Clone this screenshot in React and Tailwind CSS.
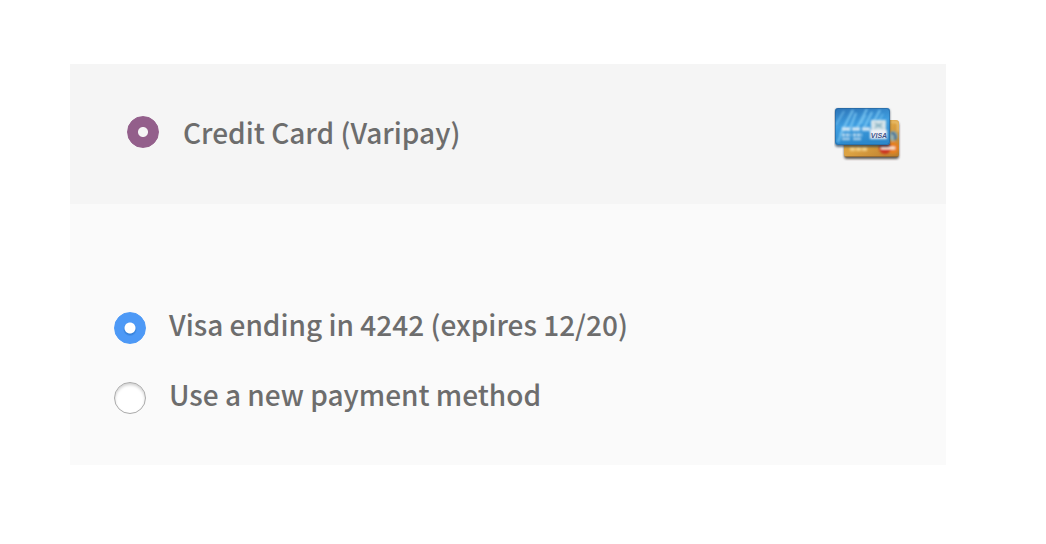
import { useState } from "react";

function CardsIcon() {
  return (
    <svg width="68" height="54" viewBox="0 0 68 54" role="img" aria-label="Visa and MasterCard" className="shrink-0">
      <defs>
        <linearGradient id="blue" x1="0" y1="0" x2="0.25" y2="1">
          <stop offset="0" stopColor="#2c73b6" />
          <stop offset="0.5" stopColor="#3f9ee0" />
          <stop offset="1" stopColor="#2c88cb" />
        </linearGradient>
        <linearGradient id="gold" x1="0" y1="0" x2="1" y2="1">
          <stop offset="0" stopColor="#d9a03c" />
          <stop offset="0.5" stopColor="#dca242" />
          <stop offset="1" stopColor="#b97b2b" />
        </linearGradient>
        <filter id="shade" x="-20%" y="-20%" width="140%" height="140%">
          <feGaussianBlur stdDeviation="0.9" />
        </filter>
        <filter id="soft" x="-20%" y="-20%" width="140%" height="140%">
          <feGaussianBlur stdDeviation="0.8" />
        </filter>
        <clipPath id="front"><rect x="1" y="1" width="55" height="37" rx="3" /></clipPath>
        <clipPath id="back"><rect x="10" y="13" width="55" height="37" rx="3" /></clipPath>
      </defs>
      <rect x="10" y="15" width="55" height="37" rx="3" fill="#30271d" opacity="0.75" filter="url(#shade)" />
      <rect x="10" y="13" width="55" height="37" rx="3" fill="url(#gold)" />
      <g clipPath="url(#back)">
        <path d="M57 15h5q2 0 2 3v7" fill="none" stroke="#f0cc80" strokeWidth="1.5" filter="url(#soft)" />
        <g filter="url(#soft)">
          <circle cx="59" cy="29" r="5" fill="#9ab0ac" />
          <path d="M57 26q6 0 4 7" stroke="#3f6f95" strokeWidth="2.5" fill="none" />
          <circle cx="59" cy="41" r="6" fill="#e78024" />
          <circle cx="51" cy="41" r="6" fill="#cb3322" />
          <path d="M47 41h14" stroke="#fff0df" strokeWidth="2.5" />
          <path d="M16 42h18" stroke="#f1ce86" strokeWidth="4" strokeDasharray="5 1" />
        </g>
        <path d="M10 49.5h55" stroke="#7d572b" strokeOpacity="0.6" />
      </g>
      <rect x="1" y="2" width="55" height="38" rx="3" fill="#172f46" opacity="0.65" filter="url(#shade)" />
      <rect x="1" y="1" width="55" height="37" rx="3" fill="url(#blue)" />
      <g clipPath="url(#front)">
        <g filter="url(#soft)" fill="none" stroke="#86d0f7">
          <path d="M6 28 19 3M15 24 22 6M23 21 33 2M30 21 38 5M38 18 46 3M4 35 9 22" strokeWidth="2" opacity="0.8" />
          <path d="M2 18 10 4M27 17 32 8M43 17 49 7" strokeWidth="1.4" opacity="0.7" />
        </g>
        <g filter="url(#soft)">
          <path d="M8 22h28" stroke="#d5e8f6" strokeWidth="3.5" strokeDasharray="8 2" />
          <path d="M8 28h9M19 28h9" stroke="#c9e2f3" strokeWidth="3" strokeDasharray="3 1" />
          <path d="M8 32h20" stroke="#b9d9ef" strokeWidth="2" strokeDasharray="8 3" />
          <rect x="37" y="13" width="15" height="10" fill="#d6e4ea" />
          <path d="m40 15 5 2 4-2-2 4 3 3-6-2-4 2 2-4z" fill="#8fb7c6" />
          <rect x="36" y="23" width="17" height="9" fill="#eef1f6" />
        </g>
        <text x="45" y="31" textAnchor="middle" fill="#3f5489" className="font-['Liberation_Sans',sans-serif] text-[7px] font-bold italic">
          VISA
        </text>
      </g>
      <rect x="1.5" y="1.5" width="54" height="36" rx="3" fill="none" stroke="#215b91" strokeOpacity="0.5" />
    </svg>
  );
}

const radioBase =
  "m-0 size-8 shrink-0 appearance-none rounded-full border border-[#aaa] bg-white shadow-[inset_0_2px_3px_rgba(0,0,0,0.18)] checked:shadow-none";
const purple =
  "checked:border-[#935f8b] checked:bg-[radial-gradient(circle,#f5f5f5_4.5px,#935f8b_5.5px)] checked:bg-origin-border";
const blue =
  "checked:border-[#4d99f6] checked:bg-[radial-gradient(circle_at_center,#fff_5px,transparent_6px),radial-gradient(circle_at_50%_54%,#337fd8_5px,#4d99f6_7px)] checked:bg-origin-border";

export default function App() {
  const [saved, setSaved] = useState("visa");
  return (
    <main className="min-h-screen bg-white py-16 pr-[100px] pl-[70px] font-['Noto_Sans_CJK_SC',sans-serif] text-[28px] leading-[40px] font-medium text-[#6d6d6d]">
      <section className="bg-[#fafafa]">
        <header className="flex h-[140px] items-center justify-between bg-[#f5f5f5] pr-11 pl-[57px]">
          <label className="flex items-center gap-6 pb-1">
            <input type="radio" name="gateway" defaultChecked className={`${radioBase} ${purple}`} />
            <span>Credit Card (Varipay)</span>
          </label>
          <CardsIcon />
        </header>
        <div className="flex flex-col gap-[30px] px-11 pt-[100px] pb-[51px]">
          <label className="flex items-end gap-[23px]">
            <input type="radio" name="saved" checked={saved === "visa"} onChange={() => setSaved("visa")} className={`${radioBase} ${blue}`} />
            <span>Visa ending in 4242 (expires 12/20)</span>
          </label>
          <label className="flex items-end gap-[23px]">
            <input type="radio" name="saved" checked={saved === "new"} onChange={() => setSaved("new")} className={`${radioBase} ${blue}`} />
            <span>Use a new payment method</span>
          </label>
        </div>
      </section>
    </main>
  );
}
